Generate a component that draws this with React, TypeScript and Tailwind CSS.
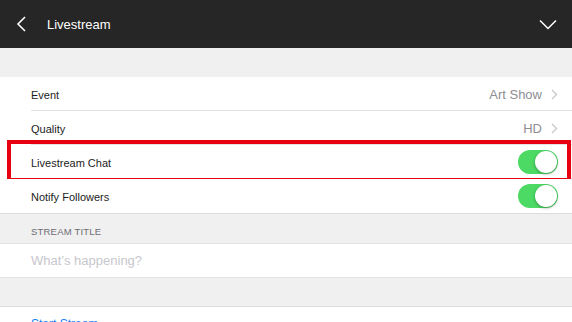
import React from 'react';

const font = { fontFamily: '"Liberation Sans", Arial, sans-serif' };

function Toggle() {
  return (
    <div className="w-[40px] h-[24px] rounded-full bg-[#4cd964] flex items-center justify-end px-[1px]">
      <div className="w-[22px] h-[22px] rounded-full bg-white shadow-[0_1px_3px_rgba(0,0,0,0.35)]" />
    </div>
  );
}

function Chevron() {
  return (
    <svg width="7" height="11" viewBox="0 0 7 11" className="ml-[9px]">
      <path d="M1 1l4.5 4.5L1 10" fill="none" stroke="#c7c7cc" strokeWidth="1.3" />
    </svg>
  );
}

function Row({ label, value, toggle, last, children }: { label: string; value?: string; toggle?: boolean; last?: boolean; children?: React.ReactNode }) {
  return (
    <div className="relative pl-[31px] bg-white">
      <div className={`h-[34px] flex items-center pr-[14px] ${last ? '' : 'border-b border-[#e3e3e6]'}`}>
        <span className="text-[11px] text-[#1c1c1c] flex-1 pt-[3px]">{label}</span>
        {value && (
          <div className="flex items-center pt-[2px]">
            <span className="text-[13px] text-[#8e8e93]">{value}</span>
            <Chevron />
          </div>
        )}
        {toggle && <Toggle />}
      </div>
      {children}
    </div>
  );
}

export default function App() {
  return (
    <div className="w-[572px] h-[322px] overflow-hidden bg-[#f0f0f0] flex flex-col" style={font}>
      <div className="h-[48px] bg-[#262626] flex items-center shrink-0">
        <svg width="12" height="16" viewBox="0 0 12 16" className="ml-[15px]">
          <path d="M10 1L3 8l7 7" fill="none" stroke="#ffffff" strokeWidth="1.6" />
        </svg>
        <span className="ml-[20px] text-[13px] text-white flex-1 pt-[2px]">Livestream</span>
        <svg width="18" height="11" viewBox="0 0 18 11" className="mr-[15px]">
          <path d="M1 1.5l8 8 8-8" fill="none" stroke="#ffffff" strokeWidth="1.5" />
        </svg>
      </div>

      <div className="h-[29px] shrink-0" />

      <div className="border-b border-[#dcdce0] shrink-0">
        <Row label="Event" value="Art Show" />
        <Row label="Quality" value="HD" />
        <Row label="Livestream Chat" toggle>
          <div className="absolute left-[7px] right-[1px] top-[-5px] bottom-[-3px] border-4 border-[#e60012] pointer-events-none" />
        </Row>
        <Row label="Notify Followers" toggle last />
      </div>

      <div className="h-[29px] shrink-0 flex items-end pl-[31px] pb-[4px]">
        <span className="text-[9.5px] tracking-[0.2px] text-[#6d6d72]">STREAM TITLE</span>
      </div>

      <div className="h-[35px] shrink-0 bg-white border-y border-[#e3e3e6] flex items-center pl-[31px]">
        <span className="text-[13px] text-[#c7c7cd]">What’s happening?</span>
      </div>

      <div className="h-[28px] shrink-0" />

      <div className="flex-1 bg-white border-t border-[#dcdce0] pl-[31px] pt-[8px] leading-none">
        <span className="text-[12px] leading-none text-[#1e7ff5]">Start Stream</span>
      </div>
    </div>
  );
}
